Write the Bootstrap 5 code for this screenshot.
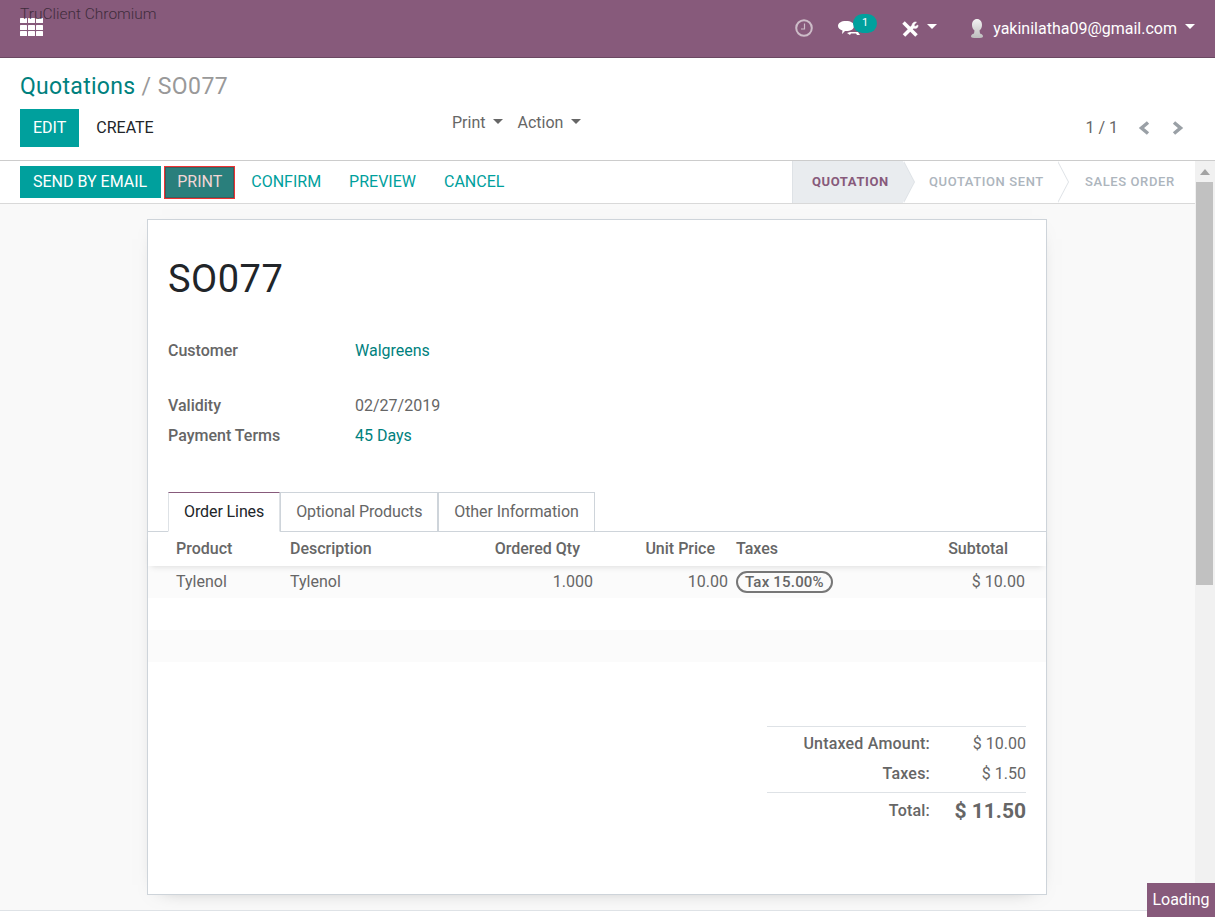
<!DOCTYPE html>
<html lang="en">

<head>
  <meta charset="UTF-8" />
  <title>Quotations / SO077</title>
  <link href="https://cdn.jsdelivr.net/npm/bootstrap@5.3.0/dist/css/bootstrap.min.css" rel="stylesheet" />
  <style>
    body { font-family: Roboto, "Liberation Sans", sans-serif; font-size: 16px; color: #666; height: 917px; overflow: hidden; background: #fff; }
    .tc-label { position: absolute; left: 20px; top: 6px; font-size: 15.500px; font-weight: 300; line-height: 17px; color: #3f2c3b; }
    .load-tag { position: absolute; right: 0; bottom: 0; width: 68px; height: 34px; background: #875a7b; color: #fff; font-size: 16px; line-height: 34px; text-align: center; }

    .top-bar { height: 58px; background: #875a7b; border-bottom: 1px solid #6b4862; color: #fff; padding: 0 20px; }
    .top-item { color: #fff; font-size: 16px; }
    .chat-wrap { position: relative; width: 39px; height: 22px; }
    .chat-num { position: absolute; left: 15px; top: -4px; width: 24px; height: 19px; border-radius: 10px; background: #00a09d; font-size: 11px; line-height: 18px; text-align: center; }
    .clock-ic { margin-right: 25px; margin-bottom: 2px; }
    .caret-w { display: inline-block; border-top: 5px solid #fff; border-left: 5px solid transparent; border-right: 5px solid transparent; }
    .caret-d { display: inline-block; border-top: 5px solid #666; border-left: 5px solid transparent; border-right: 5px solid transparent; }

    .ctrl-panel { height: 103px; border-bottom: 1px solid #ccc; padding: 14px 20px 0; }
    .crumbs { font-size: 23px; line-height: 30px; color: #999; margin-bottom: 7px; letter-spacing: .45px; }
    .crumbs a { color: #00817e; text-decoration: none; letter-spacing: .3px; }
    .act-btn { border-radius: 0; border: 0; font-size: 16px; line-height: 22px; padding: 8px 13px; height: 38px; }
    .teal-btn { background: #00a09d; color: #fff; }
    .plain-btn { color: #212529; margin-left: 4px; }
    .left-side { width: 432px; }
    .menu-link { color: #666; font-size: 16px; line-height: 22px; margin-top: 3px; }
    .menu-first { margin-right: 14px; }
    .pager-text { font-size: 16px; color: #666; height: 38px; padding-right: 11px; }
    .pager-gap { margin-right: 20px; }
    .pager-prev { margin-right: 22px; }

    .work-wrap { height: 756px; }
    .work-col { flex: 1; min-width: 0; display: flex; flex-direction: column; }
    .scroll-track { width: 20px; background: #f1f1f1; padding: 0 2px 0 1px; }
    .scroll-up { border-bottom: 6px solid #a3a3a3; border-left: 5px solid transparent; border-right: 5px solid transparent; width: 0; margin: 8px auto 7px; }
    .scroll-thumb { height: 403px; background: #c1c1c1; }

    .status-row { height: 43px; border-bottom: 1px solid #d9d9d9; padding-left: 20px; }
    .status-row .btn { border-radius: 0; border: 0; font-size: 16px; line-height: 22px; padding: 5px 14px; height: 32px; }
    .status-row .teal-btn { padding: 5px 14px 5px 13px; margin-right: 3px; }
    .status-row .print-btn { background: #2a7f7c; color: #f2d6d6; border: 1px solid #e33; box-shadow: inset 0 0 0 1px #3c5f5d; padding: 4px 12px; height: 33px; margin-right: 2px; }
    .link-btn { color: #00a09d !important; }
    .stages { height: 42px; margin-left: auto; font-size: 13px; font-weight: 500; letter-spacing: .6px; color: #adb5bd; }
    .stage { position: relative; height: 42px; line-height: 42px; text-transform: uppercase; }
    .stage::before, .stage::after { content: ""; position: absolute; top: 0; width: 11px; height: 42px; clip-path: polygon(0 0, 100% 50%, 0 100%); z-index: 1; }
    .stage::before { right: -12px; background: #dee2e6; }
    .stage::after { right: -11px; background: inherit; }
    .stage span { position: relative; z-index: 2; }
    .stage-on { background: #e9ecef; color: #875a7b; font-weight: 700; width: 111px; padding-left: 19px; border-left: 1px solid #dee2e6; }
    .stage-mid { background: #fff; width: 154px; padding-left: 26px; }
    .stage-end { background: #fff; width: 138px; padding-left: 28px; }
    .stage-end::before, .stage-end::after { display: none; }

    .sheet-area { flex: 1; background: #f9f9f9; padding: 15px 0; min-height: 0; }
    .sheet { width: 900px; height: 676px; margin: 0 0 0 147px; background: #fff; border: 1px solid #ced4da; box-shadow: 0 5px 20px -15px rgba(0,0,0,.5); padding-top: 32px; }
    .so-title { font-size: 38px; line-height: 54px; color: #212529; margin: 0 0 30px 20px; font-weight: 400; letter-spacing: .5px; }
    .field-row { display: flex; height: 30px; line-height: 30px; padding-left: 20px; }
    .field-name { width: 187px; font-weight: 500; }
    .field-val a { color: #00817e; text-decoration: none; }
    .field-gap { margin-top: 25px; }
    .tabs-bar { margin-top: 41px; padding-left: 20px; border-bottom: 1px solid #ced4da; }
    .tabs-bar .nav-link { border-radius: 0; border: 1px solid #ced4da; height: 40px; padding: 8px 15px; line-height: 22px; color: #666; margin-bottom: -1px; margin-left: 0; letter-spacing: -.1px; }
    .tabs-bar .nav-link.active { border-top-color: #875a7b; border-bottom-color: #fff; color: #212529; }

    .lines { table-layout: fixed; width: 898px; margin: 0; color: #666; border-collapse: separate; border-spacing: 0; }
    .lines thead { position: relative; z-index: 1; box-shadow: 0 4px 6px -3px rgba(0,0,0,.12); }
    .lines th, .lines td { border: 0; padding: 0 8px; vertical-align: middle; background: transparent; box-shadow: none; color: #666; }
    .lines th { height: 34px; font-weight: 500; background: #fff; }
    .lines td { height: 32px; }
    .lines .pad-first { padding-left: 28px; }
    .lines th.num { padding-right: 21px; }
    .lines .tx-col { padding-left: 0; }
    .lines th.sub-col { padding-right: 38px; }
    .lines td.sub-col { padding-right: 21px; }
    .lines .stripe-row td { background: #fbfbfb; }
    .tax-pill { display: inline-block; border: 2px solid #777; border-radius: 11px; font-size: 15px; font-weight: 500; line-height: 18px; padding: 0 7px; letter-spacing: .2px; }

    .totals { width: 259px; margin: 64px 20px 0 auto; }
    .tot-row { display: flex; justify-content: flex-end; height: 30px; line-height: 30px; }
    .tot-name { font-weight: 500; letter-spacing: .2px; }
    .tot-amt { width: 96px; text-align: right; }
    .tot-first { border-top: 1px solid #dee2e6; padding-top: 2px; height: 32px; }
    .tot-mid { padding-top: 1px; height: 31px; }
    .tot-last { border-top: 1px solid #dee2e6; margin-top: 3px; padding-top: 3px; height: 34px; }
    .tot-big { font-size: 21px; font-weight: 700; }
    .foot-line { height: 7px; border-top: 1px solid #dee2e6; background: #fff; }
  </style>
</head>

<body class="position-relative">
  <header class="top-bar d-flex align-items-center">
    <svg width="23" height="18" viewBox="0 0 23 18" fill="#fff" class="mb-1"><rect x="0" y="0" width="7" height="5" rx=".5"/><rect x="8" y="0" width="7" height="5" rx=".5"/><rect x="16" y="0" width="7" height="5" rx=".5"/><rect x="0" y="7" width="7" height="5" rx=".5"/><rect x="8" y="7" width="7" height="5" rx=".5"/><rect x="16" y="7" width="7" height="5" rx=".5"/><rect x="0" y="13" width="7" height="5" rx=".5"/><rect x="8" y="13" width="7" height="5" rx=".5"/><rect x="16" y="13" width="7" height="5" rx=".5"/></svg>
    <div class="ms-auto d-flex align-items-center top-item">
      <svg width="18" height="18" viewBox="0 0 18 18" fill="none" stroke="#cdbcc8" stroke-width="2" class="clock-ic"><circle cx="9" cy="9" r="7.800"/><path d="M9.500 4.500V10H6" stroke-width="1.200"/></svg>
      <div class="chat-wrap me-3">
        <svg width="24" height="20" viewBox="0 0 24 20" fill="#fff" class="position-absolute top-0 start-0"><path d="M8 3c5 0 8 2 8 5s-3 5-8 5H7l-3 3 .5-3.500C2 11.500 0 10 0 8c0-3 3-5 8-5z"/><path d="M9 15l3-1h8l2 3h-3l-1-1.500h-5l-1 1.500z"/></svg>
        <div class="chat-num">1</div>
      </div>
      <svg width="18" height="18" viewBox="0 0 18 18" fill="none" stroke="#fff" class="ms-2"><path d="M3 15.500L12 6.500" stroke-width="3.500"/><path d="M11.500 7.500c-1.500-3 .5-6 4-5.500L13 5l1 1.500 3-1.500c.5 3-2.500 4.500-5.500 2.500z" fill="#fff" stroke-width=".5"/><path d="M2.500 2.500l13 13" stroke-width="3.500"/></svg>
      <span class="caret-w ms-2 me-4 mb-1"></span>
      <svg width="16" height="19" viewBox="0 0 16 19" class="ms-2 me-2"><defs><linearGradient id="bustFill" x1="0" y1="0" x2="0" y2="1"><stop offset="0" stop-color="#f2f2f2"/><stop offset="1" stop-color="#bdbdbd"/></linearGradient></defs><path fill="url(#bustFill)" d="M8 0c3 0 5 2.500 5 6 0 2.500-1 4.500-2.500 5.500l.5 3c2 .5 3 1.500 3 3 0 1-2 1.500-6 1.500s-6-.5-6-1.500c0-1.500 1-2.500 3-3l.5-3C4 10.500 3 8.500 3 6c0-3.500 2-6 5-6z"/></svg>
      <span>yakinilatha09@gmail.com</span>
      <span class="caret-w ms-2 mb-1"></span>
    </div>
  </header>

  <section class="ctrl-panel">
    <div class="crumbs"><a href="#">Quotations</a> / SO077</div>
    <div class="d-flex align-items-start">
      <div class="left-side d-flex">
        <button class="btn act-btn teal-btn" type="button">EDIT</button>
        <button class="btn act-btn plain-btn" type="button">CREATE</button>
      </div>
      <div class="menu-link menu-first">Print <span class="caret-d ms-1 mb-1"></span></div>
      <div class="menu-link">Action <span class="caret-d ms-1 mb-1"></span></div>
      <div class="ms-auto d-flex align-items-center pager-text">
        <span class="pager-gap">1 / 1</span>
        <svg width="12" height="14" viewBox="0 0 12 14" fill="none" stroke="#9aa0a6" stroke-width="3.500" class="pager-prev"><path d="M10 1.500L3.500 7l6.500 5.500"/></svg>
        <svg width="12" height="14" viewBox="0 0 12 14" fill="none" stroke="#9aa0a6" stroke-width="3.500"><path d="M2 1.500L8.500 7 2 12.500"/></svg>
      </div>
    </div>
  </section>

  <div class="work-wrap d-flex">
    <div class="work-col">
      <div class="status-row d-flex align-items-center">
        <button class="btn teal-btn" type="button">SEND BY EMAIL</button>
        <button class="btn print-btn" type="button">PRINT</button>
        <button class="btn link-btn" type="button">CONFIRM</button>
        <button class="btn link-btn" type="button">PREVIEW</button>
        <button class="btn link-btn" type="button">CANCEL</button>
        <div class="stages d-flex">
          <div class="stage stage-on"><span>Quotation</span></div>
          <div class="stage stage-mid"><span>Quotation Sent</span></div>
          <div class="stage stage-end"><span>Sales Order</span></div>
        </div>
      </div>

      <div class="sheet-area">
        <div class="sheet">
          <h1 class="so-title">SO077</h1>
          <div class="field-row"><div class="field-name">Customer</div><div class="field-val"><a href="#">Walgreens</a></div></div>
          <div class="field-row field-gap"><div class="field-name">Validity</div><div class="field-val">02/27/2019</div></div>
          <div class="field-row"><div class="field-name">Payment Terms</div><div class="field-val"><a href="#">45 Days</a></div></div>

          <ul class="nav nav-tabs tabs-bar">
            <li class="nav-item"><a class="nav-link active" href="#">Order Lines</a></li>
            <li class="nav-item"><a class="nav-link" href="#">Optional Products</a></li>
            <li class="nav-item"><a class="nav-link" href="#">Other Information</a></li>
          </ul>

          <table class="table lines">
            <colgroup><col width="134"><col width="190"><col width="129"><col width="135"><col width="164"><col width="146"></colgroup>
            <thead>
              <tr>
                <th class="pad-first">Product</th>
                <th>Description</th>
                <th class="num text-end">Ordered Qty</th>
                <th class="num text-end">Unit Price</th>
                <th class="tx-col">Taxes</th>
                <th class="sub-col text-end">Subtotal</th>
              </tr>
            </thead>
            <tbody>
              <tr class="stripe-row">
                <td class="pad-first">Tylenol</td>
                <td>Tylenol</td>
                <td class="text-end">1.000</td>
                <td class="text-end">10.00</td>
                <td class="tx-col"><span class="tax-pill">Tax 15.00%</span></td>
                <td class="sub-col text-end">$ 10.00</td>
              </tr>
              <tr><td colspan="6"></td></tr>
              <tr class="stripe-row"><td colspan="6"></td></tr>
            </tbody>
          </table>

          <div class="totals">
            <div class="tot-row tot-first"><span class="tot-name">Untaxed Amount:</span><span class="tot-amt">$ 10.00</span></div>
            <div class="tot-row tot-mid"><span class="tot-name">Taxes:</span><span class="tot-amt">$ 1.50</span></div>
            <div class="tot-row tot-last"><span class="tot-name">Total:</span><span class="tot-amt tot-big">$ 11.50</span></div>
          </div>
        </div>
      </div>
      <div class="foot-line"></div>
    </div>
    <div class="scroll-track">
      <div class="scroll-up"></div>
      <div class="scroll-thumb"></div>
    </div>
  </div>

  <div class="tc-label">TruClient Chromium</div>
  <div class="load-tag">Loading</div>
</body>

</html>
